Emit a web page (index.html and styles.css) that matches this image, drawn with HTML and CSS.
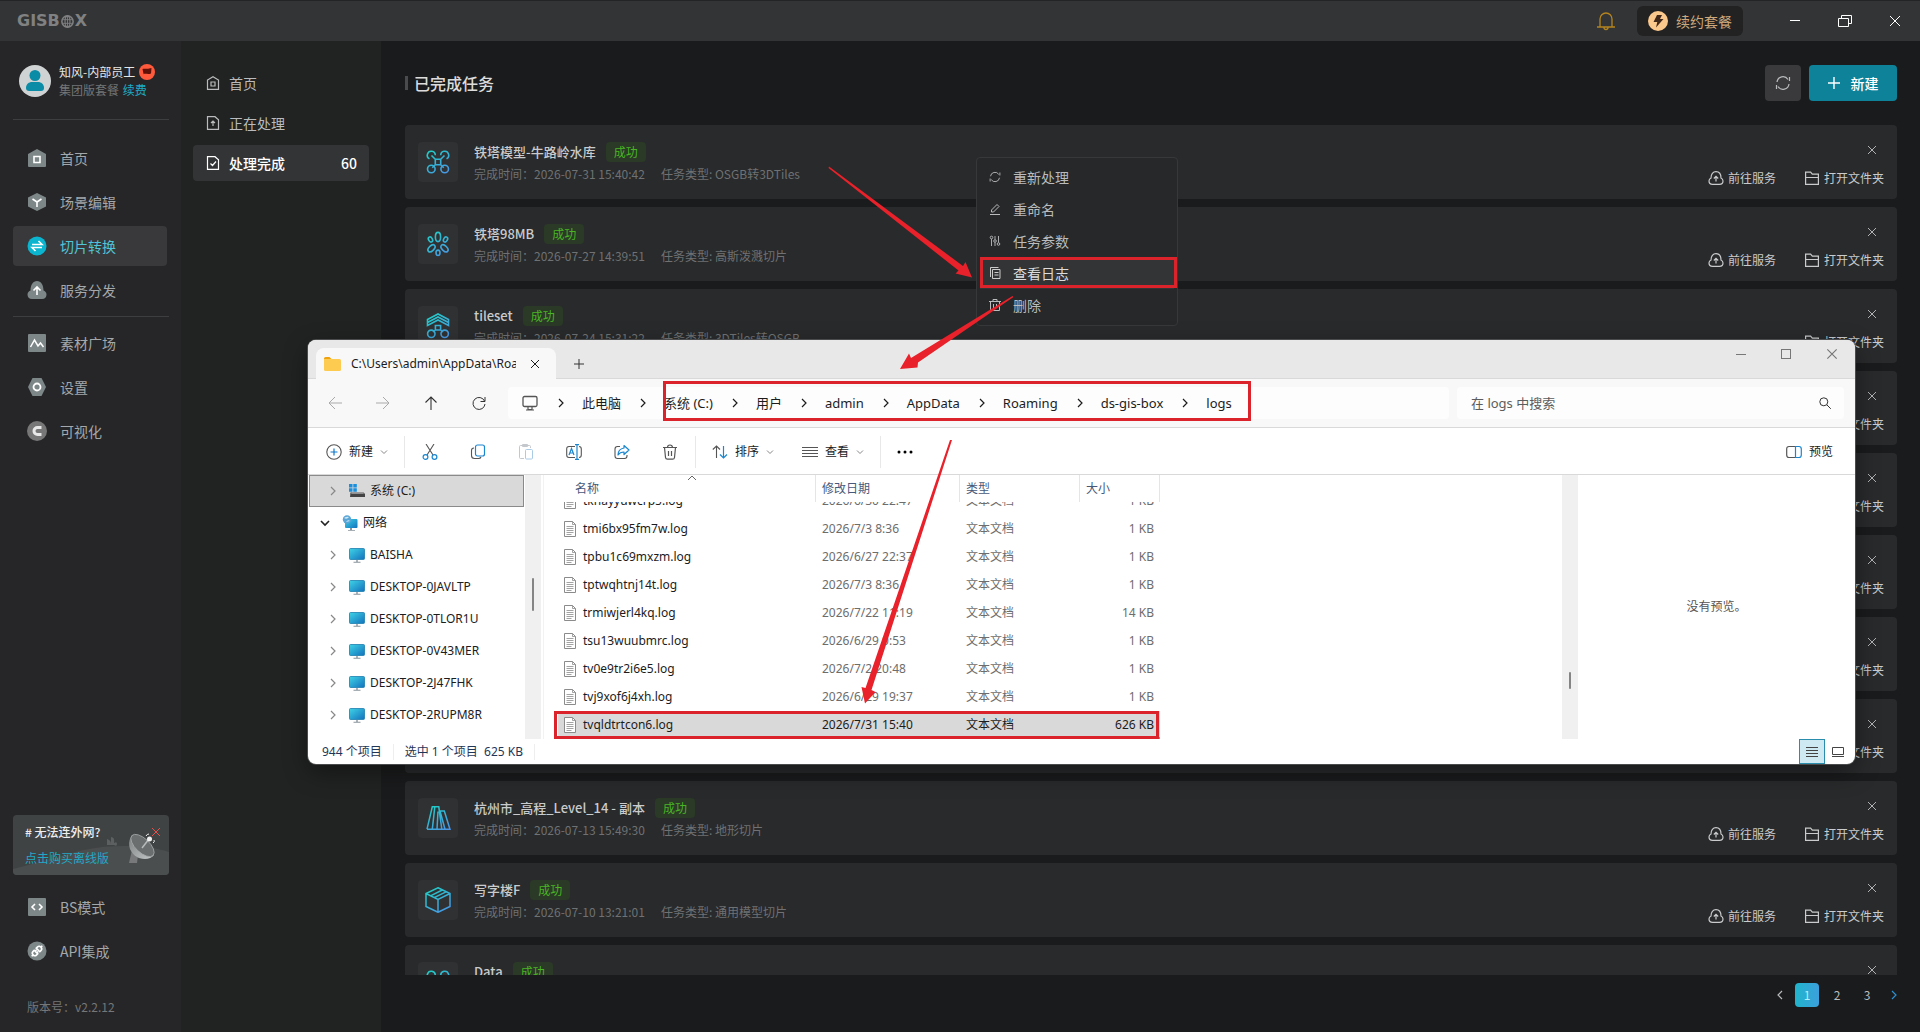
FILE: index.html
```html
<!DOCTYPE html>
<html lang="zh-CN">
<head>
  <meta charset="UTF-8">
  <meta name="viewport" content="width=device-width, initial-scale=1.0">
  <title>GISBOX</title>
  <link rel="stylesheet" href="styles.css">
</head>
<body>
  <!-- 图标库 -->
  <svg class="sprite" width="0" height="0" aria-hidden="true">
    <defs>
      <linearGradient id="tealBlue" gradientUnits="userSpaceOnUse" x1="4" y1="0" x2="22" y2="26">
        <stop offset="0" stop-color="#1fd0c4"/><stop offset="1" stop-color="#4b93e6"/>
      </linearGradient>
      <linearGradient id="screen" x1="0" y1="0" x2="1" y2="1">
        <stop offset="0" stop-color="#3fd3e6"/><stop offset="1" stop-color="#1272bd"/>
      </linearGradient>
      <linearGradient id="dish" x1="0" y1="0" x2="1" y2="1">
        <stop offset="0" stop-color="#7b7f80"/><stop offset="1" stop-color="#c4c8c9"/>
      </linearGradient>
    </defs>
    <symbol id="i-close" viewBox="0 0 12 12"><path d="M2 2l8 8M10 2l-8 8" fill="none" stroke="currentColor"/></symbol>
    <symbol id="i-refresh" viewBox="0 0 16 16"><path d="M2 7a6 6 0 0 1 11-2.500M14 9a6 6 0 0 1-11 2.500M14.500 2v4M1.500 14v-4" fill="none" stroke="currentColor" stroke-width="1.200"/></symbol>
    <symbol id="i-go" viewBox="0 0 16 16"><path d="M4.500 14.300C2.400 14.300 1 13 1 11c0-1.500.8-2.500 2-3 0-4 2-6.300 5-6.300S13 4 13 8c1.200.5 2 1.500 2 3 0 2-1.400 3.300-3.500 3.300zM8 11.500V6.500M5.800 8.500L8 6.300l2.200 2.200" fill="none" stroke="currentColor" stroke-width="1.200"/></symbol>
    <symbol id="i-folder" viewBox="0 0 16 16"><path d="M1.600 14.400V2.100h5l1.700 2h6.100v10.300zM1.600 7.500h12.800" fill="none" stroke="currentColor" stroke-width="1.200"/></symbol>
    <symbol id="t-drone" viewBox="0 0 26 26"><g fill="none" stroke="url(#tealBlue)" stroke-width="1.600"><path d="M10.300 10.300h5.400v5.400h-5.400zM10.300 10.300L6.500 6.500M15.700 10.300l3.800-3.800M10.300 15.700l-3 3M15.700 15.700l3 3M4.500 9.800A4 4 0 1 1 10.300 6.200M21.500 9.800A4 4 0 1 0 15.700 6.200"/><circle cx="6.300" cy="20" r="3.800"/><circle cx="19.700" cy="20" r="3.800"/></g></symbol>
    <symbol id="t-flower" viewBox="0 0 26 26"><g fill="none" stroke="url(#tealBlue)" stroke-width="1.600"><ellipse cx="13" cy="6" rx="2.600" ry="4.600"/><ellipse cx="5.500" cy="8.500" rx="1.900" ry="2.700" transform="rotate(-30 5.500 8.500)"/><ellipse cx="20.500" cy="8.500" rx="1.900" ry="2.700" transform="rotate(30 20.500 8.500)"/><ellipse cx="6.500" cy="17.300" rx="4.300" ry="2.500" transform="rotate(-45 6.500 17.300)"/><ellipse cx="19.500" cy="17.300" rx="4.300" ry="2.500" transform="rotate(45 19.500 17.300)"/><ellipse cx="13" cy="21.800" rx="2" ry="2.700"/></g></symbol>
    <symbol id="t-osgb" viewBox="0 0 26 26"><g fill="none" stroke="url(#tealBlue)" stroke-width="1.600"><path d="M2.500 12.500V6.500L13 1l10.500 5.500v6L13 7zM2.500 9.500L13 4l10.500 5.500M10.400 12.500h5.200v4.500h-5.200zM10.400 17l-2.400 2M15.600 17l2.400 2"/><circle cx="6.300" cy="20.800" r="3.700"/><circle cx="19.700" cy="20.800" r="3.700"/></g></symbol>
    <symbol id="t-terrain" viewBox="0 0 26 26"><path d="M2 24.200L7.300 1.800h6.500l3 22.400M7.300 24.200l2.500-22.400M13 6.500L12 24.200M2 24.200h23L19.300 6h-5M15 6l5 18.200" fill="none" stroke="url(#tealBlue)" stroke-width="1.500"/></symbol>
    <symbol id="t-box" viewBox="0 0 26 26"><path d="M13 .8l12 5.700v13L13 25.300 1 19.500v-13zM1 6.500l12 6 12-6M13 12.500v12.800M5.500 8.800L17.300 3M9.200 10.600L21 4.800" fill="none" stroke="url(#tealBlue)" stroke-width="1.500"/></symbol>
    <symbol id="i-chev" viewBox="0 0 8 12"><path d="M2 2l4 4-4 4" fill="none" stroke="currentColor" stroke-width="1.200"/></symbol>
    <symbol id="i-down" viewBox="0 0 8 8"><path d="M1 2.500l3 3 3-3" fill="none" stroke="#888"/></symbol>
    <symbol id="i-pc" viewBox="0 0 16 16"><rect x=".5" y="1.500" width="15" height="11" rx="1" fill="url(#screen)" stroke="#1c7fae" stroke-width=".8"/><path d="M7.300 13h1.400v2H7.300zM4.500 14.800h7v.9h-7z" fill="#8a949c"/></symbol>
    <symbol id="i-log" viewBox="0 0 12 16"><path d="M.5.500h8l3 3v12H.5z" fill="#fff" stroke="#8b8b8b"/><path d="M8.500.500v3h3M2.500 5.500h7M2.500 7.500h7M2.500 9.500h7M2.500 11.500h7M2.500 13.500h5" fill="none" stroke="#8b8b8b" stroke-width=".8"/></symbol>
  </svg>

  <div class="app">
    <!-- 顶部标题栏 -->
    <header class="titlebar">
      <div class="logo">GISB<svg width="13" height="13" viewBox="0 0 12 12"><g fill="none" stroke="currentColor"><circle cx="6" cy="6" r="5.200" stroke-width="1.400"/><ellipse cx="6" cy="6" rx="2.300" ry="5"/><path d="M1 4.300h10M1 7.700h10M6 1v10" stroke-width=".8"/></g></svg>X</div>
      <div class="titlebar-tools">
        <button class="bell" aria-label="通知"><svg width="18" height="20" viewBox="0 0 18 20"><path d="M3 16V8a6 6 0 0 1 12 0v8M0 16h18M7 16.500a2 2 0 0 0 4 0" fill="none" stroke="#b5841f" stroke-width="1.300"/></svg></button>
        <button class="renew"><svg width="20" height="20" viewBox="0 0 20 20"><circle cx="10" cy="10" r="10" fill="#fcc98c"/><path d="M9 4h5l-2 4h3.500L8 16.500l1.300-5.500H5.500z" fill="#40291a"/></svg>续约套餐</button>
        <div class="win-buttons">
          <button aria-label="最小化"><svg width="14" height="14" viewBox="0 0 14 14"><path d="M2 6.500h10" stroke="#fff"/></svg></button>
          <button aria-label="还原"><svg width="14" height="14" viewBox="0 0 14 14"><path d="M.5 4.500h10v8H.5zM3.500 4.500v-3h10v8h-3" fill="none" stroke="#fff"/></svg></button>
          <button aria-label="关闭"><svg width="14" height="14" viewBox="0 0 14 14"><path d="M2 2l10 10M12 2L2 12" stroke="#fff"/></svg></button>
        </div>
      </div>
    </header>

    <div class="layout">
      <!-- 左侧主菜单 -->
      <aside class="sidebar">
        <div class="user">
          <svg width="32" height="32" viewBox="0 0 32 32"><circle cx="16" cy="16" r="16" fill="#d0d3d3"/><circle cx="16" cy="10.500" r="5.500" fill="#0b8ca6"/><path d="M7 23c0-4 3-6 6-6h6c3 0 6 2 6 6 0 2-1 3-3 3H10c-2 0-3-1-3-3z" fill="#0b8ca6"/></svg>
          <div>
            <div class="user-name">知风-内部员工<svg width="16" height="16" viewBox="0 0 16 16"><circle cx="8" cy="8" r="8" fill="#ff5a3c"/><path d="M3.500 5c2.500-1 4.500.500 9-1l-.5 5.500c-3 1.300-5-.200-7.500.600L5 12z" fill="#5d1108"/></svg></div>
            <div class="user-plan">集团版套餐 <a href="#">续费</a></div>
          </div>
        </div>
        <nav class="menu">
          <a href="#"><svg width="20" height="20" viewBox="0 0 20 20"><path d="M10 1l9 5v12a1 1 0 0 1-1 1H2a1 1 0 0 1-1-1V6z" fill="#7e8788"/><path d="M7 8.500h6v6H7z" fill="none" stroke="#fff" stroke-width="1.600"/></svg>首页</a>
          <a href="#"><svg width="20" height="20" viewBox="0 0 20 20"><path d="M10 1l9 4.500v9L10 19l-9-4.500v-9z" fill="#7e8788"/><path d="M5.500 7l4.500 3 4.500-3M10 10v5" fill="none" stroke="#fff" stroke-width="1.600"/></svg>场景编辑</a>
          <a href="#" class="active"><svg width="20" height="20" viewBox="0 0 20 20"><circle cx="10" cy="10" r="9.500" fill="#0bb4cf"/><path d="M5 8.500h10L11.500 5M15 11.500H5L8.500 15" fill="none" stroke="#fff" stroke-width="1.600"/></svg>切片转换</a>
          <a href="#"><svg width="20" height="20" viewBox="0 0 20 20"><path d="M5 19c-3 0-4.500-2-4.500-4.500C.5 12.500 2 11 3.500 10.500 3.500 5 6 1 10 1s6.500 4 6.500 9.500c1.500.5 3 2 3 4 0 2.500-1.500 4.500-4.500 4.500z" fill="#7e8788"/><path d="M10 15V7.500M6.500 10.500L10 7l3.500 3.500" fill="none" stroke="#fff" stroke-width="1.600"/></svg>服务分发</a>
        </nav>
        <nav class="menu">
          <a href="#"><svg width="20" height="20" viewBox="0 0 20 20"><rect x="1" y="1" width="18" height="18" rx="1" fill="#7e8788"/><path d="M3.500 14l4-7 3.500 6 2.500-3 3 4" fill="none" stroke="#fff" stroke-width="1.500"/></svg>素材广场</a>
          <a href="#"><svg width="20" height="20" viewBox="0 0 20 20"><path d="M5.500 1h9L19 10l-4.500 9h-9L1 10z" fill="#7e8788"/><circle cx="10" cy="10" r="3.500" fill="none" stroke="#fff" stroke-width="1.800"/></svg>设置</a>
          <a href="#"><svg width="20" height="20" viewBox="0 0 20 20"><circle cx="10" cy="10" r="10" fill="#777"/><path d="M14.500 6.500h-4a3.500 3.500 0 0 0 0 7h4" fill="none" stroke="#e8e8e8" stroke-width="3"/></svg>可视化</a>
        </nav>
        <div class="sidebar-foot">
          <div class="promo">
            <svg class="promo-art" width="156" height="60" viewBox="0 0 156 60"><path d="M0 54C50 42 70 31 110 31c20 0 34 2 46 6v23H0z" fill="#4b4e4e"/><path d="M94 30v-6q4 1 4 5v-7q4 0 3 6 3-2 3 1t-3 1z" fill="#5d6060"/><path d="M119 35l6 5-1 8h-8z" fill="#77797a"/><path d="M119 20c-6 9-2 19 7 23 6 2 12 1 15-3z" fill="url(#dish)"/><ellipse cx="129.500" cy="30.500" rx="14.500" ry="7" transform="rotate(43 129.500 30.500)" fill="#6a6e6f" stroke="#a5a9aa" stroke-width=".8"/><path d="M129 33l7-9" stroke="#b8bbbc" stroke-width="1.500"/><circle cx="136.500" cy="24" r="2.500" fill="#eee"/><path d="M133 21q1-2 3-2M140 28q2-1 1-3" fill="none" stroke="#eee"/></svg>
            <button class="promo-close" aria-label="关闭提示"><svg width="12" height="12"><use href="#i-close"/></svg></button>
            <strong># 无法连外网?</strong>
            <a href="#">点击购买离线版</a>
          </div>
          <nav class="menu plain">
            <a href="#"><svg width="20" height="20" viewBox="0 0 20 20"><rect x="1" y="1" width="18" height="18" rx="1" fill="#7e8788"/><path d="M8 7l-3 3 3 3M12 7l3 3-3 3" fill="none" stroke="#fff" stroke-width="1.600"/></svg>BS模式</a>
            <a href="#"><svg width="20" height="20" viewBox="0 0 20 20"><circle cx="10" cy="10" r="9.500" fill="#7e8788"/><g transform="rotate(-45 10 10)" fill="none" stroke="#fff" stroke-width="1.600"><path d="M8.500 7.500H7a2.500 2.500 0 0 0 0 5h1.500zM11.500 7.500H13a2.500 2.500 0 0 1 0 5h-1.500zM2.500 10h2M15.500 10h2M8.500 8.800h2M8.500 11.200h2"/></g></svg>API集成</a>
          </nav>
          <p class="version">版本号：v2.2.12</p>
        </div>
      </aside>

      <!-- 任务分类 -->
      <nav class="subnav">
        <a href="#"><svg width="14" height="14" viewBox="0 0 14 14"><path d="M1.500 13.300V4L7 .700 12.500 4v9.300zM5 6h4v4H5z" fill="none" stroke="currentColor" stroke-width="1.200"/></svg>首页</a>
        <a href="#"><svg width="14" height="14" viewBox="0 0 14 14"><path d="M1.500.700h7.500l3.500 3v9.600h-11zM7 10V5M5 7l2-2 2 2" fill="none" stroke="currentColor" stroke-width="1.200"/></svg>正在处理</a>
        <a href="#" class="active"><svg width="14" height="14" viewBox="0 0 14 14"><path d="M1.500.700h7.500l3.500 3v9.600h-11zM4.500 7.500l2 2 3.500-4" fill="none" stroke="currentColor" stroke-width="1.200"/></svg>处理完成<span>60</span></a>
      </nav>

      <!-- 任务列表 -->
      <main class="main">
        <div class="main-head">
          <h1>已完成任务</h1>
          <button class="btn-refresh" aria-label="刷新"><svg width="16" height="16"><use href="#i-refresh"/></svg></button>
          <button class="btn-new"><svg width="12" height="12" viewBox="0 0 12 12"><path d="M6 0v12M0 6h12" stroke="#fff" stroke-width="1.400"/></svg>新建</button>
        </div>

        <div class="tasks">
          <article class="task">
            <div class="task-icon"><svg width="26" height="26"><use href="#t-drone"/></svg></div>
            <div class="task-info">
              <h2>铁塔模型-牛路岭水库<span class="tag">成功</span></h2>
              <p><span>完成时间：2026-07-31 15:40:42</span><span>任务类型: OSGB转3DTiles</span></p>
            </div>
            <div class="task-side">
              <button class="task-close" aria-label="删除任务"><svg width="12" height="12"><use href="#i-close"/></svg></button>
              <div class="task-actions">
                <a href="#"><svg width="16" height="16"><use href="#i-go"/></svg>前往服务</a>
                <a href="#"><svg width="16" height="16"><use href="#i-folder"/></svg>打开文件夹</a>
              </div>
            </div>
          </article>
          <article class="task">
            <div class="task-icon"><svg width="26" height="26"><use href="#t-flower"/></svg></div>
            <div class="task-info">
              <h2>铁塔98MB<span class="tag">成功</span></h2>
              <p><span>完成时间：2026-07-27 14:39:51</span><span>任务类型: 高斯泼溅切片</span></p>
            </div>
            <div class="task-side">
              <button class="task-close" aria-label="删除任务"><svg width="12" height="12"><use href="#i-close"/></svg></button>
              <div class="task-actions">
                <a href="#"><svg width="16" height="16"><use href="#i-go"/></svg>前往服务</a>
                <a href="#"><svg width="16" height="16"><use href="#i-folder"/></svg>打开文件夹</a>
              </div>
            </div>
          </article>
          <article class="task">
            <div class="task-icon"><svg width="26" height="26"><use href="#t-osgb"/></svg></div>
            <div class="task-info">
              <h2>tileset<span class="tag">成功</span></h2>
              <p><span>完成时间：2026-07-24 15:31:22</span><span>任务类型: 3DTiles转OSGB</span></p>
            </div>
            <div class="task-side">
              <button class="task-close" aria-label="删除任务"><svg width="12" height="12"><use href="#i-close"/></svg></button>
              <div class="task-actions">
                <a href="#"><svg width="16" height="16"><use href="#i-folder"/></svg>打开文件夹</a>
              </div>
            </div>
          </article>
          <article class="task">
            <div class="task-side">
              <button class="task-close" aria-label="删除任务"><svg width="12" height="12"><use href="#i-close"/></svg></button>
              <div class="task-actions"><a href="#"><svg width="16" height="16"><use href="#i-folder"/></svg>打开文件夹</a></div>
            </div>
          </article>
          <article class="task">
            <div class="task-side">
              <button class="task-close" aria-label="删除任务"><svg width="12" height="12"><use href="#i-close"/></svg></button>
              <div class="task-actions"><a href="#"><svg width="16" height="16"><use href="#i-folder"/></svg>打开文件夹</a></div>
            </div>
          </article>
          <article class="task">
            <div class="task-side">
              <button class="task-close" aria-label="删除任务"><svg width="12" height="12"><use href="#i-close"/></svg></button>
              <div class="task-actions"><a href="#"><svg width="16" height="16"><use href="#i-folder"/></svg>打开文件夹</a></div>
            </div>
          </article>
          <article class="task">
            <div class="task-side">
              <button class="task-close" aria-label="删除任务"><svg width="12" height="12"><use href="#i-close"/></svg></button>
              <div class="task-actions"><a href="#"><svg width="16" height="16"><use href="#i-folder"/></svg>打开文件夹</a></div>
            </div>
          </article>
          <article class="task">
            <div class="task-side">
              <button class="task-close" aria-label="删除任务"><svg width="12" height="12"><use href="#i-close"/></svg></button>
              <div class="task-actions"><a href="#"><svg width="16" height="16"><use href="#i-folder"/></svg>打开文件夹</a></div>
            </div>
          </article>
          <article class="task">
            <div class="task-icon"><svg width="26" height="26"><use href="#t-terrain"/></svg></div>
            <div class="task-info">
              <h2>杭州市_高程_Level_14 - 副本<span class="tag">成功</span></h2>
              <p><span>完成时间：2026-07-13 15:49:30</span><span>任务类型: 地形切片</span></p>
            </div>
            <div class="task-side">
              <button class="task-close" aria-label="删除任务"><svg width="12" height="12"><use href="#i-close"/></svg></button>
              <div class="task-actions">
                <a href="#"><svg width="16" height="16"><use href="#i-go"/></svg>前往服务</a>
                <a href="#"><svg width="16" height="16"><use href="#i-folder"/></svg>打开文件夹</a>
              </div>
            </div>
          </article>
          <article class="task">
            <div class="task-icon"><svg width="26" height="26"><use href="#t-box"/></svg></div>
            <div class="task-info">
              <h2>写字楼F<span class="tag">成功</span></h2>
              <p><span>完成时间：2026-07-10 13:21:01</span><span>任务类型: 通用模型切片</span></p>
            </div>
            <div class="task-side">
              <button class="task-close" aria-label="删除任务"><svg width="12" height="12"><use href="#i-close"/></svg></button>
              <div class="task-actions">
                <a href="#"><svg width="16" height="16"><use href="#i-go"/></svg>前往服务</a>
                <a href="#"><svg width="16" height="16"><use href="#i-folder"/></svg>打开文件夹</a>
              </div>
            </div>
          </article>
          <article class="task">
            <div class="task-icon"><svg width="26" height="26"><use href="#t-drone"/></svg></div>
            <div class="task-info">
              <h2>Data<span class="tag">成功</span></h2>
            </div>
            <div class="task-side">
              <button class="task-close" aria-label="删除任务"><svg width="12" height="12"><use href="#i-close"/></svg></button>
            </div>
          </article>
        </div>

        <div class="pager">
          <button aria-label="上一页"><svg width="8" height="12" class="flip"><use href="#i-chev"/></svg></button>
          <button class="current">1</button>
          <button>2</button>
          <button>3</button>
          <button class="next" aria-label="下一页"><svg width="8" height="12"><use href="#i-chev"/></svg></button>
        </div>
      </main>
    </div>
  </div>

  <!-- 右键菜单 -->
  <div class="context-menu">
    <button><svg width="12" height="12"><use href="#i-refresh"/></svg>重新处理</button>
    <button><svg width="12" height="12" viewBox="0 0 12 12"><path d="M1 11.500h10M2.500 9V7l5.500-5.500 2 2L4.500 9z" fill="none" stroke="currentColor"/></svg>重命名</button>
    <button><svg width="12" height="12" viewBox="0 0 12 12"><g fill="none" stroke="currentColor" stroke-width=".9"><path d="M2.500 4v7M6 1v3.500M6 7.500V11M9.500 1v6.500"/><circle cx="2.500" cy="2.500" r="1.300"/><circle cx="6" cy="6" r="1.300"/><circle cx="9.500" cy="9" r="1.300"/></g></svg>任务参数</button>
    <button class="hover"><svg width="12" height="12" viewBox="0 0 12 12"><path d="M3.500 2.500h7.500v9H3.500zM1.500 10V.500h8M5.500 5.500h4M5.500 8h4" fill="none" stroke="currentColor" stroke-width=".9"/></svg>查看日志</button>
    <button><svg width="12" height="12" viewBox="0 0 12 12"><path d="M0 2.500h12M4 2.500v-2h4v2M1.500 2.500v9h9v-9M4.500 5v4M7.500 5v4" fill="none" stroke="currentColor"/></svg>删除</button>
  </div>

  <!-- 资源管理器窗口 -->
  <section class="explorer">
    <div class="ex-tabs">
      <div class="ex-tab">
        <svg width="17" height="14" viewBox="0 0 17 14"><path d="M0 1.500Q0 0 1.500 0h4l2 2H0z" fill="#f0a30c"/><path d="M0 2h15.500q1.500 0 1.500 1.500V12.500q0 1.500-1.500 1.500h-14Q0 14 0 12.500z" fill="#fccb4f"/></svg>
        <span>C:\Users\admin\AppData\Roaming</span>
        <button aria-label="关闭标签页"><svg width="12" height="12"><use href="#i-close"/></svg></button>
      </div>
      <button class="ex-add" aria-label="新标签页"><svg width="12" height="12" viewBox="0 0 12 12"><path d="M6 1v10M1 6h10" stroke="#333"/></svg></button>
      <div class="ex-win">
        <button aria-label="最小化"><svg width="12" height="12" viewBox="0 0 12 12"><path d="M1 6.500h10" stroke="#777"/></svg></button>
        <button aria-label="最大化"><svg width="12" height="12" viewBox="0 0 12 12"><rect x="1.500" y="1.500" width="9" height="9" fill="none" stroke="#777"/></svg></button>
        <button aria-label="关闭"><svg width="14" height="14"><use href="#i-close"/></svg></button>
      </div>
    </div>

    <div class="ex-address">
      <div class="ex-nav">
        <button aria-label="后退"><svg width="14" height="14" viewBox="0 0 14 14"><path d="M14 7H1M7 1L1 7l6 6" fill="none" stroke="#aaa"/></svg></button>
        <button aria-label="前进"><svg width="14" height="14" viewBox="0 0 14 14"><path d="M0 7h13M7 1l6 6-6 6" fill="none" stroke="#aaa"/></svg></button>
        <button aria-label="上移"><svg width="14" height="14" viewBox="0 0 14 14"><path d="M7 14V1M1.500 6.500L7 1l5.500 5.500" fill="none" stroke="#333" stroke-width="1.100"/></svg></button>
        <button aria-label="刷新"><svg width="14" height="14" viewBox="0 0 14 14"><path d="M12.500 5A6 6 0 1 0 13 8M13 1v4.500H8.500" fill="none" stroke="#333"/></svg></button>
      </div>
      <div class="crumbs">
        <svg width="16" height="16" viewBox="0 0 16 16"><rect x="1" y="1.500" width="14" height="10" rx="1.500" fill="none" stroke="#555" stroke-width="1.300"/><path d="M6 12v2.500h4V12M4 15h8" fill="none" stroke="#555" stroke-width="1.200"/></svg>
        <svg width="8" height="12"><use href="#i-chev"/></svg><span>此电脑</span>
        <svg width="8" height="12"><use href="#i-chev"/></svg><span>系统 (C:)</span>
        <svg width="8" height="12"><use href="#i-chev"/></svg><span>用户</span>
        <svg width="8" height="12"><use href="#i-chev"/></svg><span>admin</span>
        <svg width="8" height="12"><use href="#i-chev"/></svg><span>AppData</span>
        <svg width="8" height="12"><use href="#i-chev"/></svg><span>Roaming</span>
        <svg width="8" height="12"><use href="#i-chev"/></svg><span>ds-gis-box</span>
        <svg width="8" height="12"><use href="#i-chev"/></svg><span>logs</span>
      </div>
      <div class="ex-search">
        <input type="text" placeholder="在 logs 中搜索" aria-label="搜索">
        <svg width="12" height="12" viewBox="0 0 12 12"><circle cx="4.800" cy="4.800" r="4" fill="none" stroke="#333"/><path d="M7.800 7.800l4 4" stroke="#333"/></svg>
      </div>
    </div>

    <div class="ex-toolbar">
      <button><svg width="16" height="16" viewBox="0 0 16 16"><circle cx="8" cy="8" r="7.200" fill="none" stroke="#555" stroke-width="1.100"/><path d="M8 4.500v7M4.500 8h7" stroke="#0f78c8" stroke-width="1.200"/></svg>新建<svg width="8" height="8"><use href="#i-down"/></svg></button>
      <i></i>
      <div class="ex-icons">
        <button aria-label="剪切"><svg width="16" height="16" viewBox="0 0 16 16"><path d="M4 0l7 11M12 0L5 11" stroke="#555" stroke-width="1.100"/><g fill="none" stroke="#1a86d0" stroke-width="1.200"><circle cx="3.500" cy="13" r="2.400"/><circle cx="12.500" cy="13" r="2.400"/></g></svg></button>
        <button aria-label="复制"><svg width="16" height="16" viewBox="0 0 16 16"><rect x="5.500" y="1" width="9" height="11" rx="2" fill="none" stroke="#1a86d0" stroke-width="1.200"/><path d="M4 4Q1.500 4 1.500 6.500v5q0 3 3 3h4q2 0 2.500-1.500" fill="none" stroke="#555" stroke-width="1.100"/></svg></button>
        <button aria-label="粘贴"><svg width="16" height="16" viewBox="0 0 16 16"><path d="M6 14.500H2.500q-1 0-1-1v-11q0-1 1-1h9q1 0 1 1V4M4.500.500h5v2h-5z" fill="none" stroke="#c4c8cc"/><rect x="7.500" y="5.500" width="7" height="9.500" rx="1" fill="none" stroke="#a9cbe6"/></svg></button>
        <button aria-label="重命名"><svg width="16" height="16" viewBox="0 0 16 16"><path d="M9 2.500H3Q.7 2.500.7 5v6Q.7 13.500 3 13.500h6M13 2.500q2.300 0 2.300 2.500v6q0 2.500-2.300 2.500" fill="none" stroke="#555" stroke-width="1.100"/><path d="M11 .700v14.600M9 .700h4M9 15.300h4M3 11l2.500-6.500L8 11M4 9h3" fill="none" stroke="#1a86d0" stroke-width="1.200"/></svg></button>
        <button aria-label="共享"><svg width="16" height="16" viewBox="0 0 16 16"><path d="M6 2.500H3.500Q1 2.500 1 5v7q0 2.500 2.500 2.500h7q2.500 0 2.500-2.500v-1" fill="none" stroke="#555" stroke-width="1.100"/><path d="M10 1.500L15 6l-5 4.500V8Q6 8 4 11q0-6 6-7z" fill="none" stroke="#1a86d0" stroke-width="1.200" stroke-linejoin="round"/></svg></button>
        <button aria-label="删除"><svg width="16" height="16" viewBox="0 0 16 16"><path d="M1 3.500h14M5.500 3.500a2.500 2.500 0 0 1 5 0M2.500 3.500l1 10q.2 1.700 2 1.700h5q1.800 0 2-1.700l1-10M6.500 7v5M9.500 7v5" fill="none" stroke="#555" stroke-width="1.200"/></svg></button>
      </div>
      <i></i>
      <button><svg width="16" height="16" viewBox="0 0 16 16"><path d="M4.500 14V2M.800 5.500L4.500 2l3.500 3.500" fill="none" stroke="#555" stroke-width="1.100"/><path d="M11.500 2v12M8 10.500l3.500 3.500L15 10.500" fill="none" stroke="#1a86d0" stroke-width="1.200"/></svg>排序<svg width="8" height="8"><use href="#i-down"/></svg></button>
      <button><svg width="16" height="16" viewBox="0 0 16 16"><path d="M0 3.500h16M0 6.500h16M0 9.500h16M0 12.500h16" stroke="#555"/></svg>查看<svg width="8" height="8"><use href="#i-down"/></svg></button>
      <i></i>
      <button aria-label="更多"><svg width="16" height="16" viewBox="0 0 16 16"><circle cx="2" cy="8" r="1.500"/><circle cx="8" cy="8" r="1.500"/><circle cx="14" cy="8" r="1.500"/></svg></button>
      <button class="ex-preview-btn"><svg width="16" height="16" viewBox="0 0 16 16"><path d="M10 2.500H3Q.7 2.500.7 5v6Q.7 13.500 3 13.500h7" fill="none" stroke="#555" stroke-width="1.200"/><path d="M9.500 2.500H13q2.300 0 2.300 2.500v6q0 2.500-2.300 2.500H9.500z" fill="none" stroke="#1a86d0" stroke-width="1.200"/></svg>预览</button>
    </div>

    <div class="ex-body">
      <ul class="tree">
        <li class="selected"><svg class="arrow" width="8" height="12"><use href="#i-chev"/></svg><svg width="16" height="16" viewBox="0 0 16 16"><path d="M0 1h3.500v3.500H0zM4.300 1h3.500v3.500H4.300zM0 5.300h3.500v3.500H0zM4.300 5.300h3.500v3.500H4.300z" fill="#1a8fdd"/><path d="M1.500 9.500h13L16 11v3H1z" fill="#444"/><path d="M3 9.500h11l1 1.300H2z" fill="#aaa"/></svg>系统 (C:)</li>
        <li class="root"><svg class="arrow" width="12" height="8" viewBox="0 0 12 8"><path d="M2 2l4 4 4-4" fill="none" stroke="currentColor" stroke-width="1.600"/></svg><svg width="16" height="16" viewBox="0 0 16 16"><rect x="3" y="4" width="12.500" height="9" rx="1" fill="url(#screen)"/><path d="M8 13h2v2H8zM6 15h7v.800H6z" fill="#8a949c"/><circle cx="5" cy="4.500" r="4.200" fill="#5ba6d6"/><path d="M2 3q3-2 5-1-2 3-5 1zM4 7q2-3 4-1" fill="#cfe8f5"/></svg>网络</li>
        <li><svg class="arrow" width="8" height="12"><use href="#i-chev"/></svg><svg width="16" height="16"><use href="#i-pc"/></svg>BAISHA</li>
        <li><svg class="arrow" width="8" height="12"><use href="#i-chev"/></svg><svg width="16" height="16"><use href="#i-pc"/></svg>DESKTOP-0JAVLTP</li>
        <li><svg class="arrow" width="8" height="12"><use href="#i-chev"/></svg><svg width="16" height="16"><use href="#i-pc"/></svg>DESKTOP-0TLOR1U</li>
        <li><svg class="arrow" width="8" height="12"><use href="#i-chev"/></svg><svg width="16" height="16"><use href="#i-pc"/></svg>DESKTOP-0V43MER</li>
        <li><svg class="arrow" width="8" height="12"><use href="#i-chev"/></svg><svg width="16" height="16"><use href="#i-pc"/></svg>DESKTOP-2J47FHK</li>
        <li><svg class="arrow" width="8" height="12"><use href="#i-chev"/></svg><svg width="16" height="16"><use href="#i-pc"/></svg>DESKTOP-2RUPM8R</li>
      </ul>
      <div class="track tree-track"><b></b></div>
      <div class="files" id="files">
        <table>
          <thead>
            <tr><th class="name">名称<svg class="sort" width="12" height="6" viewBox="0 0 12 6"><path d="M2 5l4-4 4 4" fill="none" stroke="#666"/></svg></th><th class="date">修改日期</th><th class="type">类型</th><th class="size">大小</th></tr>
          </thead>
          <tbody>
            <tr><td><svg width="12" height="16"><use href="#i-log"/></svg>tkhayyuwcrp5.log</td><td>2026/6/30 22:47</td><td>文本文档</td><td>1 KB</td></tr>
            <tr><td><svg width="12" height="16"><use href="#i-log"/></svg>tmi6bx95fm7w.log</td><td>2026/7/3 8:36</td><td>文本文档</td><td>1 KB</td></tr>
            <tr><td><svg width="12" height="16"><use href="#i-log"/></svg>tpbu1c69mxzm.log</td><td>2026/6/27 22:37</td><td>文本文档</td><td>1 KB</td></tr>
            <tr><td><svg width="12" height="16"><use href="#i-log"/></svg>tptwqhtnj14t.log</td><td>2026/7/3 8:36</td><td>文本文档</td><td>1 KB</td></tr>
            <tr><td><svg width="12" height="16"><use href="#i-log"/></svg>trmiwjerl4kq.log</td><td>2026/7/22 11:19</td><td>文本文档</td><td>14 KB</td></tr>
            <tr><td><svg width="12" height="16"><use href="#i-log"/></svg>tsu13wuubmrc.log</td><td>2026/6/29 0:53</td><td>文本文档</td><td>1 KB</td></tr>
            <tr><td><svg width="12" height="16"><use href="#i-log"/></svg>tv0e9tr2i6e5.log</td><td>2026/7/2 20:48</td><td>文本文档</td><td>1 KB</td></tr>
            <tr><td><svg width="12" height="16"><use href="#i-log"/></svg>tvj9xof6j4xh.log</td><td>2026/6/29 19:37</td><td>文本文档</td><td>1 KB</td></tr>
            <tr class="selected"><td><svg width="12" height="16"><use href="#i-log"/></svg>tvqldtrtcon6.log</td><td>2026/7/31 15:40</td><td>文本文档</td><td>626 KB</td></tr>
          </tbody>
        </table>
      </div>
      <div class="track files-track"><b></b></div>
      <div class="preview">没有预览。</div>
    </div>

    <div class="ex-status">
      <span>944 个项目</span>
      <span>选中 1 个项目&nbsp; 625 KB</span>
      <div class="ex-views">
        <button class="on" aria-label="详细信息"><svg width="12" height="12" viewBox="0 0 12 12"><path d="M0 1.500h12M0 4.500h12M0 7.500h12M0 10.500h12" stroke="#444"/></svg></button>
        <button aria-label="大图标"><svg width="12" height="12" viewBox="0 0 12 12"><path d="M.5 1.500h11v7H.5zM0 10.500h12" fill="none" stroke="#444"/></svg></button>
      </div>
    </div>
  </section>

  <!-- 标注：红框和箭头 -->
  <svg class="marks" width="1920" height="1032" viewBox="0 0 1920 1032" aria-hidden="true">
    <g fill="none" stroke="#db232b" stroke-width="3">
      <rect x="981.500" y="258.500" width="194" height="28"/>
      <rect x="664.500" y="382.500" width="585" height="37"/>
      <rect x="555.500" y="712.500" width="602" height="25"/>
    </g>
    <g fill="#e8212a">
      <path d="M829 166.500L963 266l2.500-4 6.500 15.500-16.500-4 3-3L828.500 168z"/>
      <path d="M1013.500 297L918 362.500l-.5 5-17.500 1.500 9-15.500 2 4.500L1012.500 296z"/>
      <path d="M950 440h2L871.500 690l4 2-10.500 11.500L861.500 687l4 1z"/>
    </g>
  </svg>

  <script>
    // 文件列表滚动到底部
    const files = document.getElementById('files');
    files.scrollTop = files.scrollHeight;
  </script>
</body>
</html>
```

FILE: styles.css
```css
* {
  box-sizing: border-box;
}

body {
  margin: 0;
  font-family: "Noto Sans CJK SC", sans-serif;
  font-size: 14px;
  line-height: 20px;
  color: #b9bbbc;
  background: #1a1b1c;
}

button {
  display: flex;
  align-items: center;
  justify-content: center;
  padding: 0;
  border: none;
  background: none;
  color: inherit;
  font: inherit;
}

a {
  color: inherit;
  text-decoration: none;
}

svg {
  flex: none;
}

h1, h2, p, ul {
  margin: 0;
  padding: 0;
}

.sprite {
  position: absolute;
}

.app {
  display: flex;
  flex-direction: column;
  height: 100vh;
  overflow: hidden;
}

/* 标题栏 */
.titlebar {
  display: flex;
  align-items: center;
  justify-content: space-between;
  height: 41px;
  flex: none;
  padding: 0 15px 0 17px;
  background: #333435;
  border-top: 1px solid #232425;
}

.logo {
  display: flex;
  align-items: center;
  gap: 1px;
  font-family: "DejaVu Sans", sans-serif;
  font-size: 16px;
  font-weight: bold;
  color: #808182;
}

.titlebar-tools {
  display: flex;
  align-items: center;
}

.renew {
  gap: 8px;
  width: 106px;
  height: 30px;
  margin: 0 42px 0 22px;
  border-radius: 6px;
  background: #222223;
  color: #cda77c;
}

.win-buttons {
  display: flex;
  gap: 30px;
}

.win-buttons button {
  width: 20px;
  height: 30px;
}

.layout {
  display: flex;
  flex: 1;
  min-height: 0;
}

/* 左侧菜单 */
.sidebar {
  display: flex;
  flex-direction: column;
  width: 181px;
  flex: none;
  padding: 20px 12px 0 13px;
  background: #262628;
}

.user {
  display: flex;
  gap: 8px;
  padding: 2px 0 20px 6px;
  font-size: 12px;
  line-height: 18px;
}

.user > svg {
  margin-top: 2px;
}

.user-name {
  display: flex;
  align-items: center;
  gap: 4px;
  color: #e6e6e6;
  white-space: nowrap;
}

.user-plan {
  color: #737576;
}

.user-plan a {
  margin-left: 1px;
}

.user-plan a,
.promo a {
  color: #1fa9c6;
}

.menu {
  display: flex;
  flex-direction: column;
  gap: 4px;
  padding: 18px 2px 6px 0;
  border-top: 1px solid #3d3e40;
}

.menu + .menu {
  padding-top: 6px;
}

.menu a {
  display: flex;
  align-items: center;
  gap: 13px;
  height: 40px;
  padding-left: 14px;
  border-radius: 4px;
  color: #a4a8aa;
}

.menu .active {
  background: #39393b;
  color: #4fc4da;
}

.menu.plain {
  padding: 12px 2px 0 0;
  border: none;
}

.sidebar-foot {
  margin-top: auto;
}

.promo {
  position: relative;
  display: flex;
  flex-direction: column;
  gap: 6px;
  height: 60px;
  padding: 7px 12px;
  border-radius: 4px;
  overflow: hidden;
  background: #404344;
  font-size: 12px;
}

.promo strong {
  position: relative;
  font-weight: 500;
  color: #eee;
}

.promo a {
  position: relative;
}

.promo-art {
  position: absolute;
  left: 0;
  top: 0;
}

.promo-close {
  position: absolute;
  top: 11px;
  right: 7px;
  color: #e2524c;
}

.version {
  padding: 26px 0 15px 14px;
  font-size: 12px;
  color: #747678;
}

/* 任务分类 */
.subnav {
  display: flex;
  flex-direction: column;
  gap: 4px;
  width: 200px;
  flex: none;
  padding: 24px 12px;
  background: #212222;
}

.subnav a {
  display: flex;
  align-items: center;
  gap: 9px;
  height: 36px;
  padding: 0 12px 0 13px;
  border-radius: 4px;
}

.subnav .active {
  background: #333436;
  color: #fff;
  font-weight: 500;
}

.subnav span {
  margin-left: auto;
}

/* 主区域 */
.main {
  display: flex;
  flex-direction: column;
  flex: 1;
  min-width: 0;
  padding: 24px 23px 0 24px;
}

.main-head {
  display: flex;
  align-items: center;
  gap: 8px;
  margin-bottom: 24px;
}

.main-head h1 {
  display: flex;
  align-items: center;
  gap: 6px;
  margin-right: auto;
  font-size: 16px;
  font-weight: 500;
  color: #dcdcdc;
}

.main-head h1::before {
  content: "";
  width: 3px;
  height: 14px;
  background: #4a4b4d;
}

.btn-refresh {
  width: 36px;
  height: 36px;
  border-radius: 4px;
  background: #3a3a3c;
}

.btn-new {
  gap: 11px;
  width: 88px;
  height: 36px;
  border-radius: 4px;
  background: #0e8299;
  color: #fff;
  font-weight: 500;
}

.tasks {
  display: flex;
  flex-direction: column;
  gap: 8px;
  flex: 1;
  min-height: 0;
  overflow: hidden;
}

.task {
  display: flex;
  flex: none;
  height: 74px;
  padding: 17px 13px;
  border-radius: 4px;
  background: #282a2b;
}

.task-icon {
  display: flex;
  align-items: center;
  justify-content: center;
  width: 40px;
  height: 40px;
  margin-right: 16px;
  border-radius: 4px;
  background: #303133;
}

.task-info h2 {
  display: flex;
  gap: 10px;
  font-size: 13px;
  font-weight: 500;
  color: #c9cbcc;
}

.tag {
  padding: 0 8px;
  border-radius: 4px;
  background: #2b3a27;
  color: #49b424;
  font-size: 12px;
  font-weight: 400;
}

.task-info p {
  display: flex;
  gap: 16px;
  margin-top: 2px;
  font-size: 12px;
  color: #6f7173;
}

.task-side {
  display: flex;
  flex-direction: column;
  align-items: flex-end;
  gap: 12px;
  margin-left: auto;
  font-size: 12px;
  color: #c9cbcc;
}

.task-close {
  margin: 2px 6px 0 0;
  color: #b0b3b4;
}

.task-actions {
  display: flex;
  gap: 28px;
}

.task-actions a {
  display: flex;
  align-items: center;
  gap: 4px;
}

.pager {
  display: flex;
  justify-content: flex-end;
  gap: 6px;
  height: 57px;
  padding-top: 8px;
  font-size: 12px;
}

.pager button {
  width: 24px;
  height: 24px;
  border-radius: 4px;
}

.pager button:last-child,
.pager button:first-child {
  width: 18px;
}

.pager .current {
  background: linear-gradient(90deg, #20b5cc, #3c9fdc);
  color: #b8ecfa;
}

.pager .next {
  margin-right: -6px;
  color: #2d8fd0;
}

.flip {
  transform: scaleX(-1);
}

/* 右键菜单 */
.context-menu {
  position: absolute;
  left: 976px;
  top: 157px;
  width: 202px;
  padding: 3px 3px 4px;
  border: 1px solid #37383a;
  border-radius: 4px;
  background: #262829;
}

.context-menu button {
  justify-content: flex-start;
  gap: 12px;
  width: 100%;
  height: 32px;
  padding-left: 9px;
}

.context-menu .hover {
  background: #333436;
  color: #dcdcdc;
}

/* 资源管理器 */
.explorer {
  position: absolute;
  left: 308px;
  right: 65px;
  top: 340px;
  border-radius: 8px;
  overflow: hidden;
  background: #fff;
  box-shadow: 0 0 0 1px #4a4b4c, 0 8px 24px rgba(0, 0, 0, 0.4);
  font-family: "Noto Sans", "Noto Sans CJK SC", sans-serif;
  font-size: 12px;
  color: #1c1c1c;
}

.ex-tabs {
  display: flex;
  align-items: flex-end;
  height: 39px;
  padding-left: 8px;
  background: #e8e8e8;
  border-bottom: 1px solid #d9d9d9;
}

.ex-tab {
  display: flex;
  align-items: center;
  gap: 10px;
  width: 240px;
  height: 31px;
  margin-bottom: -1px;
  padding: 0 15px 0 8px;
  border-radius: 8px 8px 0 0;
  background: #f8f8f8;
}

.ex-tab span {
  flex: 1;
  min-width: 0;
  overflow: hidden;
  white-space: nowrap;
}

.ex-tab button {
  margin-left: 3px;
}

.ex-add {
  width: 46px;
  height: 28px;
}

.ex-win {
  display: flex;
  align-self: flex-start;
  gap: 33px;
  margin: 7px 16px 0 auto;
  color: #777;
}

.ex-address {
  display: flex;
  align-items: center;
  height: 49px;
  padding-right: 11px;
  background: #f8f8f8;
  border-bottom: 1px solid #d9d9d9;
}

.ex-nav {
  display: flex;
  gap: 34px;
  padding: 0 22px 0 20px;
}

.crumbs {
  display: flex;
  align-items: center;
  gap: 17px;
  flex: 1;
  height: 32px;
  padding-left: 14px;
  border-radius: 4px;
  background: #fdfdfd;
  font-size: 13px;
}

.crumbs > svg:first-child {
  margin-right: 2px;
}

.crumbs span {
  margin-right: 1px;
}

.ex-search {
  display: flex;
  align-items: center;
  width: 387px;
  height: 32px;
  margin-left: 8px;
  padding: 0 13px 0 14px;
  border-radius: 4px;
  background: #fdfdfd;
}

.ex-search input {
  flex: 1;
  min-width: 0;
  padding: 0;
  border: none;
  outline: none;
  background: none;
  font-family: inherit;
  font-size: 13px;
}

.ex-search input::placeholder {
  color: #5c5c5c;
}

.ex-toolbar {
  display: flex;
  align-items: center;
  height: 47px;
  padding: 2px 22px 0 18px;
  border-bottom: 1px solid #d9d9d9;
}

.ex-toolbar button {
  gap: 7px;
}

.ex-toolbar i {
  width: 1px;
  height: 32px;
  margin: 0 16px;
  background: #e8e8e8;
}

.ex-toolbar > button + button {
  margin-left: 28px;
}

.ex-icons {
  display: flex;
  gap: 32px;
  padding: 0 1px;
}

.ex-toolbar .ex-preview-btn {
  margin-left: auto;
}

.ex-body {
  display: flex;
  height: 264px;
}

.tree {
  width: 217px;
  padding-left: 1px;
  list-style: none;
  overflow: hidden;
}

.tree li {
  display: flex;
  align-items: center;
  gap: 5px;
  width: 215px;
  height: 32px;
  padding-left: 20px;
  white-space: nowrap;
}

.tree .arrow {
  margin-right: 7px;
  color: #888;
}

.tree .root {
  padding-left: 10px;
}

.tree .root .arrow {
  margin-right: 6px;
  color: #222;
}

.tree .selected {
  padding-left: 19px;
  border: 1px solid #8a8a8a;
  background: #d9d9d9;
}

.track {
  position: relative;
  width: 16px;
  background: #f0f0f0;
}

.track b {
  position: absolute;
  left: 7px;
  width: 2px;
  border-radius: 1px;
  background: #858585;
}

.tree-track b {
  top: 103px;
  height: 33px;
}

.files-track b {
  top: 197px;
  height: 17px;
}

.files {
  flex: 1;
  margin-left: 2px;
  padding-left: 14px;
  border-left: 1px solid #f2f2f2;
  overflow: hidden;
}

.files table {
  width: 602px;
  border-collapse: collapse;
  table-layout: fixed;
}

.files th {
  position: sticky;
  top: 0;
  height: 27px;
  padding: 0 6px;
  background: #fff;
  background-clip: padding-box;
  box-shadow: inset -1px 0 #e5e5e5;
  color: #47597a;
  font-weight: 400;
  text-align: left;
}

.files th.name {
  width: 258px;
  padding-left: 17px;
}

.files th.date {
  width: 144px;
}

.files th.type {
  width: 120px;
}

.sort {
  position: absolute;
  left: 128px;
  top: 0;
}

.files td {
  height: 28px;
  padding: 0 6px;
  line-height: 16px;
  color: #6d6d6d;
}

.files td:first-child {
  color: #1c1c1c;
}

.files td:last-child {
  text-align: right;
}

.files td svg {
  margin-right: 7px;
  vertical-align: middle;
}

.files .selected td {
  background: #d9d9d9;
  box-shadow: inset 0 -2px #8f8f8f;
  color: #1c1c1c;
}

.preview {
  display: flex;
  align-items: center;
  justify-content: center;
  width: 277px;
  color: #555;
}

.ex-status {
  display: flex;
  align-items: center;
  height: 25px;
  padding: 0 4px 0 3px;
  color: #1f3657;
}

.ex-status span {
  padding: 0 11px;
  line-height: 16px;
  border-right: 1px solid #eee;
}

.ex-views {
  display: flex;
  margin-left: auto;
}

.ex-views button {
  width: 26px;
  height: 25px;
}

.ex-views .on {
  border: 1px solid #2a8dad;
  background: #cfe9f3;
}

.marks {
  position: absolute;
  left: 0;
  top: 0;
  pointer-events: none;
}
```
